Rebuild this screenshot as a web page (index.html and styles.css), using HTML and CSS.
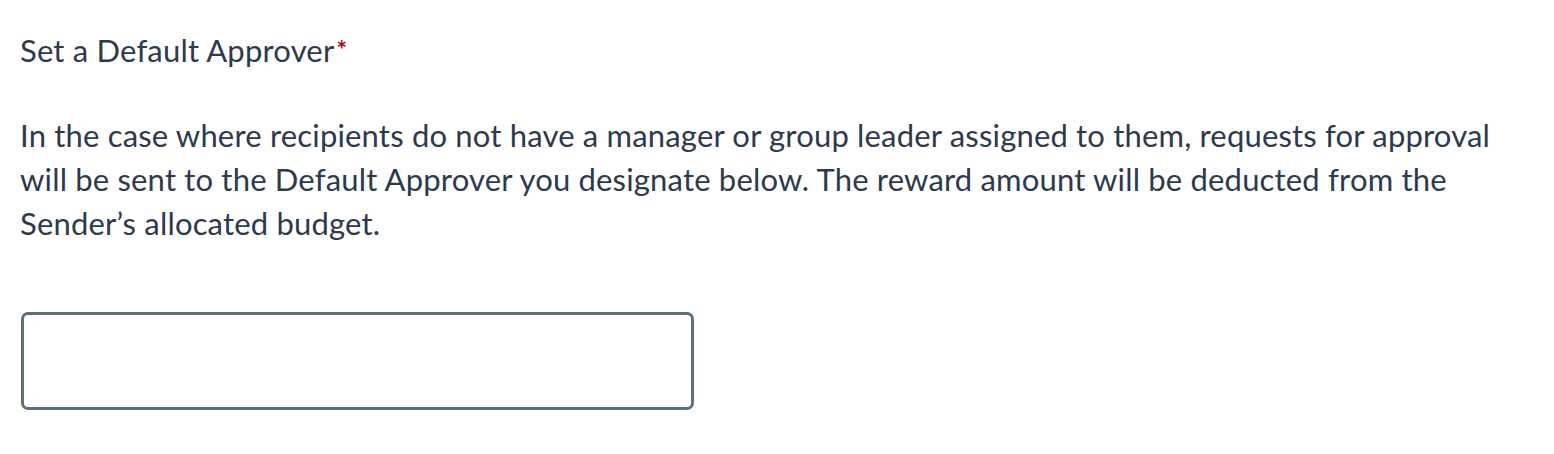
FILE: index.html
```html
<!DOCTYPE html>
<html>
<head>
<meta charset="utf-8">
<link rel="stylesheet" href="styles.css">
</head>
<body>
<div class="field">
  <div class="label">Set a Default Approver<span class="req">*</span></div>
  <p class="desc">In the case where recipients do not have a manager or group leader assigned to them, requests for approval will be sent to the Default Approver you designate below. The reward amount will be deducted from the Sender’s allocated budget.</p>
  <input class="box" type="text">
</div>
</body>
</html>
```
FILE: styles.css
```css
html, body { margin: 0; background: #fff; }
body { font-family: Lato, "Open Sans", sans-serif; color: #2c3a4c; letter-spacing: 0.18px; }
.field { padding: 28px 20px 0 20px; display: flex; flex-direction: column; align-items: flex-start; }
.label { font-size: 31px; line-height: 44px; }
.req { color: #a50f0f; font-size: 25px; font-weight: 700; line-height: 0; position: relative; top: -3px; margin-left: 2px; }
.desc { margin: 41px 0 0 0; font-size: 31px; line-height: 44px; width: 1500px; }
.box { margin-top: 67px; box-sizing: border-box; width: 673px; height: 98px; border: 3px solid #5a6f81; border-radius: 7px; margin-left: 1px; outline: none; }
```
